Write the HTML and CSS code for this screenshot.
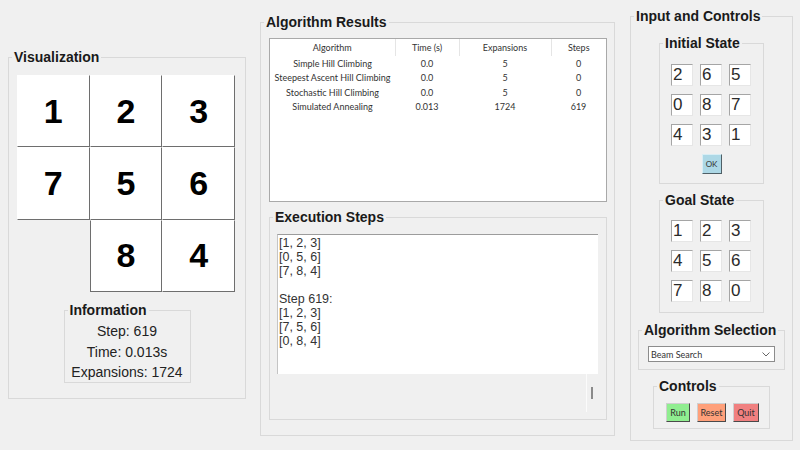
FILE: index.html
```html
<!DOCTYPE html>
<html lang="en">
<head>
<meta charset="utf-8">
<title>8-Puzzle Solver</title>
<link rel="stylesheet" href="styles.css">
</head>
<body>
<main class="app">
  <fieldset class="group viz">
    <legend class="title">Visualization</legend>
    <div class="board">
      <div class="cell">1</div>
      <div class="cell">2</div>
      <div class="cell">3</div>
      <div class="cell">7</div>
      <div class="cell">5</div>
      <div class="cell">6</div>
      <div class="cell blank"></div>
      <div class="cell after-blank">8</div>
      <div class="cell">4</div>
    </div>
    <fieldset class="group info">
      <legend class="title">Information</legend>
      <div class="info-lines">
        <p>Step: 619</p>
        <p>Time: 0.013s</p>
        <p>Expansions: 1724</p>
      </div>
    </fieldset>
  </fieldset>

  <fieldset class="group results">
    <legend class="title">Algorithm Results</legend>
    <div class="table-box">
      <table class="res-table">
        <colgroup>
          <col class="c1"><col class="c2"><col class="c3"><col class="c4">
        </colgroup>
        <thead>
          <tr><th>Algorithm</th><th>Time (s)</th><th>Expansions</th><th>Steps</th></tr>
        </thead>
        <tbody>
          <tr><td>Simple Hill Climbing</td><td>0.0</td><td>5</td><td>0</td></tr>
          <tr><td>Steepest Ascent Hill Climbing</td><td>0.0</td><td>5</td><td>0</td></tr>
          <tr><td>Stochastic Hill Climbing</td><td>0.0</td><td>5</td><td>0</td></tr>
          <tr><td>Simulated Annealing</td><td>0.013</td><td>1724</td><td>619</td></tr>
        </tbody>
      </table>
    </div>
    <fieldset class="group steps">
      <legend class="title">Execution Steps</legend>
      <div class="steps-text">[1, 2, 3]
[0, 5, 6]
[7, 8, 4]

Step 619:
[1, 2, 3]
[7, 5, 6]
[0, 8, 4]</div>
      <div class="steps-foot"><span class="sep"></span><span class="grip"></span></div>
    </fieldset>
  </fieldset>

  <fieldset class="group controls">
    <legend class="title">Input and Controls</legend>
    <fieldset class="group sub initial">
      <legend class="title">Initial State</legend>
      <div class="tiles">
        <div class="tile">2</div><div class="tile">6</div><div class="tile">5</div>
        <div class="tile">0</div><div class="tile">8</div><div class="tile">7</div>
        <div class="tile">4</div><div class="tile">3</div><div class="tile">1</div>
      </div>
      <button class="ok" type="button">OK</button>
    </fieldset>
    <fieldset class="group sub goal">
      <legend class="title">Goal State</legend>
      <div class="tiles">
        <div class="tile">1</div><div class="tile">2</div><div class="tile">3</div>
        <div class="tile">4</div><div class="tile">5</div><div class="tile">6</div>
        <div class="tile">7</div><div class="tile">8</div><div class="tile">0</div>
      </div>
    </fieldset>
    <fieldset class="group algsel">
      <legend class="title">Algorithm Selection</legend>
      <div class="select"><span>Beam Search</span>
        <svg class="chev" width="8" height="5" viewBox="0 0 8 5"><path d="M0.5 0.5 L4 4 L7.5 0.5" fill="none" stroke="#666" stroke-width="1"/></svg>
      </div>
    </fieldset>
    <fieldset class="group ctrl">
      <legend class="title">Controls</legend>
      <div class="buttons">
        <button class="btn run" type="button">Run</button>
        <button class="btn reset" type="button">Reset</button>
        <button class="btn quit" type="button">Quit</button>
      </div>
    </fieldset>
  </fieldset>
</main>
</body>
</html>
```

FILE: styles.css
```css
* { box-sizing: border-box; }
html, body { margin: 0; padding: 0; }
fieldset { margin: 0; padding: 0; min-width: 0; }
body {
  width: 800px;
  height: 450px;
  overflow: hidden;
  background: #f0f0f0;
  font-family: "Liberation Sans", Arial, sans-serif;
  color: #222;
}
.app {
  display: flex;
  align-items: flex-start;
  padding-left: 8px;
}
.group {
  border: 1px solid #d9d9d9;
}
.title {
  font-weight: bold;
  font-size: 14px;
  line-height: 16px;
  padding: 0 2px;
  margin-left: 3px;
  color: #1a1a1a;
}

/* Visualization */
.viz { width: 238px; height: 350px; margin-top: 49px; }
.board {
  display: grid;
  grid-template-columns: repeat(3, 1fr);
  grid-template-rows: repeat(3, 1fr);
  width: 218px;
  height: 217px;
  margin: 10px 0 0 8px;
}
.cell {
  background: #fff;
  border: 1px solid;
  border-color: #fff #6e6e6e #6e6e6e #fff;
  display: flex;
  align-items: center;
  justify-content: center;
  font-size: 34px;
  font-weight: bold;
  color: #000;
}
.cell.blank { background: transparent; border: none; }
.cell.after-blank { border-left-color: #6e6e6e; }

.info { width: 127px; height: 81px; margin: 10px auto 0; }
.info-lines { padding-top: 3px; text-align: center; }
.info-lines p { margin: 0; font-size: 14px; line-height: 20.5px; color: #222; }

/* Results */
.results { width: 355px; height: 422px; margin: 14px 0 0 14px; }
.table-box {
  margin: 8px 0 0 8px;
  width: 338px;
  height: 164px;
  background: #fff;
  border: 1px solid #a9a9a9;
}
.res-table {
  border-collapse: collapse;
  table-layout: fixed;
  width: 336px;
  font-family: Lato, "Liberation Sans", sans-serif;
  font-size: 9px;
  color: #333;
}
.res-table col.c1 { width: 125px; }
.res-table col.c2 { width: 64px; }
.res-table col.c3 { width: 92px; }
.res-table col.c4 { width: 55px; }
.res-table th {
  font-weight: normal;
  height: 17px;
  padding: 0;
  border-left: 1px solid #e5e5e5;
  text-align: center;
}
.res-table th:first-child { border-left: none; }
.res-table td { height: 14.5px; padding: 0; text-align: center; white-space: nowrap; }

.steps { width: 338px; height: 211px; margin: 7px 0 0 8px; }
.steps-text {
  margin: 9px 0 0 7px;
  width: 321px;
  height: 140px;
  background: #fff;
  border-top: 1px solid #9c9c9c;
  border-left: 1px solid #c4c4c4;
  padding: 1px 0 0 1px;
  font-size: 12.5px;
  line-height: 14px;
  color: #333;
  white-space: pre;
}
.steps-foot {
  margin-left: 7px;
  width: 321px;
  height: 38px;
  display: flex;
  justify-content: flex-end;
  padding-right: 5px;
}
.sep { width: 1px; height: 38px; background: #fbfbfb; }
.grip { width: 2px; height: 12px; background: #8a8a8a; margin: 13px 0 0 4px; }

/* Controls */
.controls { width: 163px; height: 433px; margin: 8px 0 0 15px; }
.sub { width: 105px; margin: 11px 0 0 28px; }
.sub.initial { height: 149px; }
.sub.goal { height: 121px; margin-top: 8px; }
.tiles {
  display: grid;
  grid-template-columns: repeat(3, 22px);
  gap: 8px 7px;
  margin: 13px 0 0 11px;
}
.sub.goal .tiles { margin-top: 12px; }
.tile {
  width: 22px;
  height: 22px;
  background: #fff;
  border: 1px solid;
  border-color: #a5a5a5 #e6e6e6 #e6e6e6 #a5a5a5;
  font-size: 17px;
  line-height: 20px;
  padding-left: 1px;
  color: #2a2a2a;
}
.ok {
  display: block;
  margin: 8px auto 0;
  width: 20px;
  height: 20px;
  padding: 0;
  background: #add8e6;
  border: 1px solid;
  border-color: #d8eef5 #4f5f66 #4f5f66 #d8eef5;
  font-family: Lato, "Liberation Sans", sans-serif;
  font-size: 8px;
  color: #333;
}

.algsel { width: 147px; height: 48px; margin: 9px 0 0 7px; }
.select {
  margin: 8px 0 0 9px;
  width: 127px;
  height: 16px;
  background: #fff;
  border: 1px solid #8c8c8c;
  display: flex;
  align-items: center;
  justify-content: space-between;
  padding: 0 4px 0 2px;
  font-family: Lato, "Liberation Sans", sans-serif;
  font-size: 9px;
  color: #333;
}
.chev { display: block; }

.ctrl { width: 117px; height: 51px; margin: 8px 0 0 22px; }
.buttons { display: flex; gap: 7px; margin: 9px 0 0 12px; }
.btn {
  height: 19px;
  padding: 0;
  border: 1px solid;
  border-color: #cfcfcf #4a4a4a #4a4a4a #cfcfcf;
  font-family: Lato, "Liberation Sans", sans-serif;
  font-size: 9px;
  color: #333;
}
.run { width: 24px; background: #90ee90; }
.reset { width: 29px; background: #ffa07a; }
.quit { width: 26px; background: #f08080; }
```
